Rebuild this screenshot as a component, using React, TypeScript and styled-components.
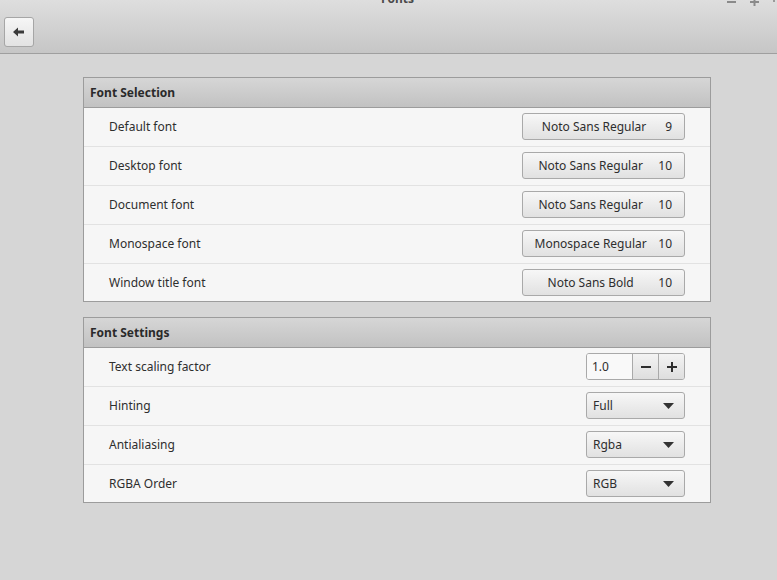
import React from "react";
import styled, { createGlobalStyle } from "styled-components";

const Global = createGlobalStyle`
  html, body { margin: 0; padding: 0; background: #d6d6d6; }
  body { font-family: "Noto Sans", "Open Sans", sans-serif; font-size: 12px; color: #2e2e2e; }
  * { box-sizing: border-box; }
`;

const Window = styled.div`
  width: 777px;
  height: 580px;
  background: #d6d6d6;
  overflow: hidden;
  display: flex;
  flex-direction: column;
`;

const HeaderBar = styled.header`
  height: 54px;
  flex: none;
  background: linear-gradient(#dedede, #c6c6c6);
  border-bottom: 1px solid #9f9f9f;
  display: flex;
  flex-direction: column;
`;

const TitleRow = styled.div`
  height: 0;
  display: flex;
  align-items: flex-start;
  position: relative;
`;

const Title = styled.div`
  flex: 1;
  text-align: center;
  margin-top: -9px;
  font-weight: bold;
  font-size: 12px;
  line-height: 16px;
  color: #4a4a4a;
  padding-left: 18px;
`;

const Controls = styled.div`
  position: absolute;
  right: -6px;
  top: 0;
  display: flex;
  gap: 13px;
  align-items: flex-start;
`;

const HeaderContent = styled.div`
  padding: 17px 4px 0;
  display: flex;
`;

const BackButton = styled.button`
  width: 30px;
  height: 30px;
  padding: 0;
  border: 1px solid #a6a6a6;
  border-radius: 3px;
  background: linear-gradient(#f6f6f6, #e2e2e2);
  display: flex;
  align-items: center;
  justify-content: center;
`;

const Content = styled.main`
  padding: 23px 0 0 83px;
  display: flex;
  flex-direction: column;
  gap: 15px;
`;

const Panel = styled.section`
  width: 628px;
  border: 1px solid #9c9c9c;
  background: #f6f6f6;
`;

const PanelHeader = styled.div`
  height: 30px;
  padding-left: 6px;
  display: flex;
  align-items: center;
  background: linear-gradient(#d6d6d6, #c2c2c2);
  border-bottom: 1px solid #9c9c9c;
  font-weight: bold;
  color: #2a2a2a;
`;

const Row = styled.div`
  height: 39px;
  display: flex;
  align-items: center;
  justify-content: space-between;
  padding: 0 25px 1px 25px;
  border-bottom: 1px solid #e2e2e2;
  &:last-child { border-bottom: none; height: 37px; padding-bottom: 0; }
`;

const Label = styled.span`
  color: #2e2e2e;
`;

const FontButton = styled.button`
  width: 163px;
  height: 27px;
  border: 1px solid #a9a9a9;
  border-radius: 3px;
  background: linear-gradient(#f7f7f7, #e1e1e1);
  display: flex;
  align-items: center;
  padding: 0 12px 0 10px;
  font-family: inherit;
  font-size: 12px;
  color: #2e2e2e;
`;

const FontName = styled.span`
  flex: 1;
  text-align: center;
  white-space: nowrap;
`;

const FontSize = styled.span`
  margin-left: 10px;
`;

const Spin = styled.div`
  width: 99px;
  height: 27px;
  display: flex;
  border: 1px solid #a9a9a9;
  border-radius: 3px;
  overflow: hidden;
`;

const SpinEntry = styled.div`
  flex: 1;
  background: #f9f9f9;
  padding-left: 5px;
  display: flex;
  align-items: center;
  color: #2e2e2e;
`;

const SpinBtn = styled.div`
  width: 26px;
  border-left: 1px solid #a9a9a9;
  background: linear-gradient(#f3f3f3, #dedede);
  display: flex;
  align-items: center;
  justify-content: center;
`;

const Combo = styled.button`
  width: 99px;
  height: 27px;
  border: 1px solid #a9a9a9;
  border-radius: 3px;
  background: linear-gradient(#f7f7f7, #e1e1e1);
  display: flex;
  align-items: center;
  justify-content: space-between;
  padding: 0 10px 0 6px;
  font-family: inherit;
  font-size: 12px;
  color: #2e2e2e;
`;

const Arrow = () => (
  <svg width="11" height="6" viewBox="0 0 11 6">
    <path d="M0 0 H11 L5.5 6 Z" fill="#333" />
  </svg>
);

const fonts = [
  ["Default font", "Noto Sans Regular", "9"],
  ["Desktop font", "Noto Sans Regular", "10"],
  ["Document font", "Noto Sans Regular", "10"],
  ["Monospace font", "Monospace Regular", "10"],
  ["Window title font", "Noto Sans Bold", "10"],
];

const combos = [
  ["Hinting", "Full"],
  ["Antialiasing", "Rgba"],
  ["RGBA Order", "RGB"],
];

export default function App() {
  return (
    <Window>
      <Global />
      <HeaderBar>
        <TitleRow>
          <Title>Fonts</Title>
          <Controls>
            <svg width="10" height="6" viewBox="0 0 10 6"><rect x="0" y="1" width="9" height="2" fill="#8a8a8a" /></svg>
            <svg width="10" height="6" viewBox="0 0 10 6"><rect x="0" y="1" width="9" height="2" fill="#8a8a8a" /><rect x="3.5" y="0" width="2" height="6" fill="#8a8a8a" /></svg>
            <svg width="10" height="6" viewBox="0 0 10 6"><rect x="0" y="0" width="2" height="2" fill="#9a9a9a" /></svg>
          </Controls>
        </TitleRow>
        <HeaderContent>
          <BackButton>
            <svg width="12" height="10" viewBox="0 0 12 10">
              <path d="M0 5 L5 0.5 V3.5 H11 V6.5 H5 V9.5 Z" fill="#3a3a3a" />
            </svg>
          </BackButton>
        </HeaderContent>
      </HeaderBar>
      <Content>
        <Panel>
          <PanelHeader>Font Selection</PanelHeader>
          {fonts.map(([label, name, size]) => (
            <Row key={label}>
              <Label>{label}</Label>
              <FontButton>
                <FontName>{name}</FontName>
                <FontSize>{size}</FontSize>
              </FontButton>
            </Row>
          ))}
        </Panel>
        <Panel>
          <PanelHeader>Font Settings</PanelHeader>
          <Row>
            <Label>Text scaling factor</Label>
            <Spin>
              <SpinEntry>1.0</SpinEntry>
              <SpinBtn>
                <svg width="10" height="10" viewBox="0 0 10 10"><rect x="0" y="4" width="10" height="2" fill="#2e2e2e" /></svg>
              </SpinBtn>
              <SpinBtn>
                <svg width="10" height="10" viewBox="0 0 10 10"><rect x="0" y="4" width="10" height="2" fill="#2e2e2e" /><rect x="4" y="0" width="2" height="10" fill="#2e2e2e" /></svg>
              </SpinBtn>
            </Spin>
          </Row>
          {combos.map(([label, value]) => (
            <Row key={label}>
              <Label>{label}</Label>
              <Combo>
                <span>{value}</span>
                <Arrow />
              </Combo>
            </Row>
          ))}
        </Panel>
      </Content>
    </Window>
  );
}
